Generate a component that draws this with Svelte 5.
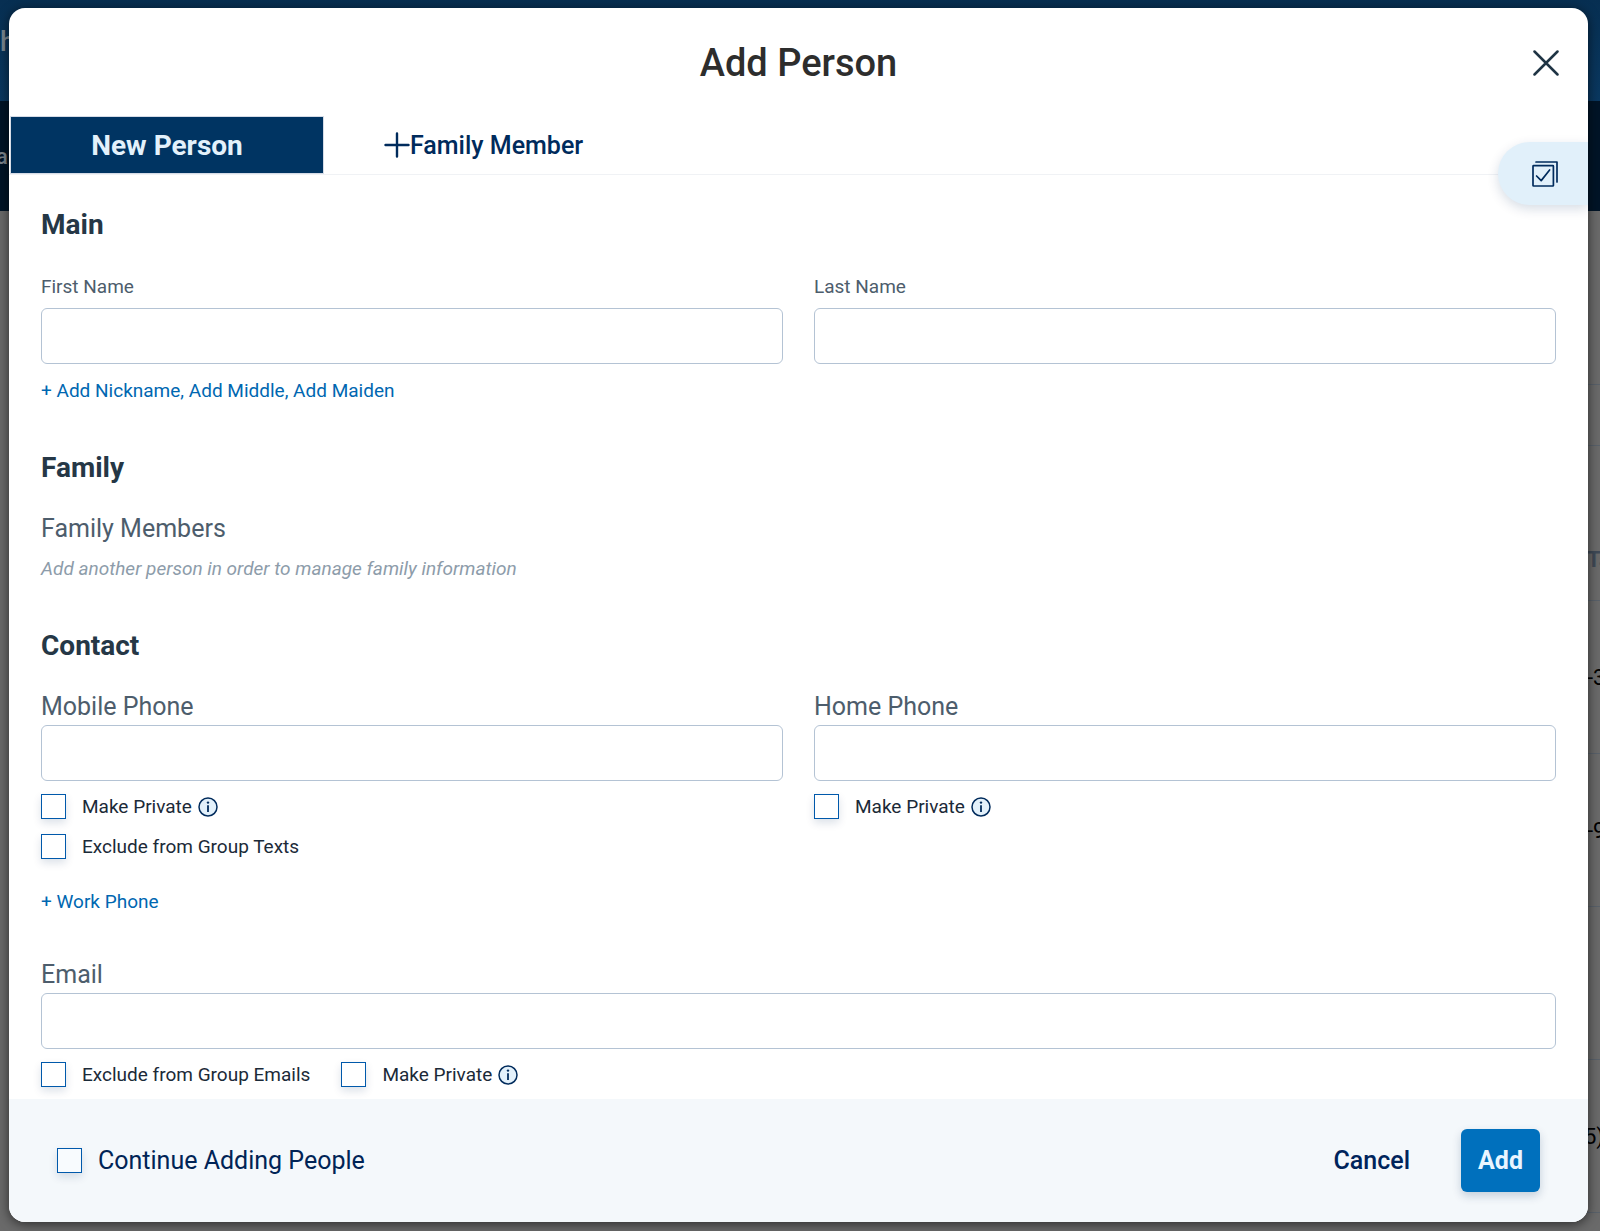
<script lang="ts">
  interface PersonForm {
    firstName: string;
    lastName: string;
    mobilePhone: string;
    homePhone: string;
    email: string;
    mobilePrivate: boolean;
    excludeTexts: boolean;
    homePrivate: boolean;
    excludeEmails: boolean;
    emailPrivate: boolean;
  }

  let form: PersonForm = $state({
    firstName: '',
    lastName: '',
    mobilePhone: '',
    homePhone: '',
    email: '',
    mobilePrivate: false,
    excludeTexts: false,
    homePrivate: false,
    excludeEmails: false,
    emailPrivate: false
  });

  let continueAdding = $state(false);

  function handleSubmit(event: SubmitEvent) {
    event.preventDefault();
  }
</script>

{#snippet infoIcon()}
  <svg class="info" viewBox="0 0 20 20" role="img" aria-label="More information">
    <circle cx="10" cy="10" r="9" fill="#e3f1fb" stroke="#002b5c" stroke-width="1.5" />
    <circle cx="10" cy="5.6" r="1.2" fill="#002b5c" />
    <path d="M10 8.2V15" stroke="#002b5c" stroke-width="1.8" fill="none" />
  </svg>
{/snippet}

<div class="screen">
  <!-- Page behind the dialog -->
  <div class="page" aria-hidden="true">
    <div class="topbar">h</div>
    <div class="navbar">a</div>
    <div class="listing">
      <div class="row spacer"></div>
      <div class="row filter"></div>
      <div class="row heading">Ta</div>
      <div class="row">-3</div>
      <div class="row">-9</div>
      <div class="row"></div>
      <div class="row last">5)</div>
    </div>
  </div>

  <form class="modal" role="dialog" aria-labelledby="dialog-title" onsubmit={handleSubmit}>
    <header>
      <h1 id="dialog-title">Add Person</h1>
      <button type="button" class="close" aria-label="Close">
        <svg viewBox="0 0 26 26" fill="none" stroke="#1f3444" stroke-width="2.5" stroke-linecap="round">
          <path d="M1.5 1.5L24.5 24.5M24.5 1.5L1.5 24.5" />
        </svg>
      </button>
    </header>

    <nav class="tabs">
      <button type="button" class="tab active">New Person</button>
      <button type="button" class="tab">
        <svg viewBox="0 0 26 26" fill="none" stroke="#002b5c" stroke-width="2.4" stroke-linecap="round">
          <path d="M13 1.5V24.5M1.5 13H24.5" />
        </svg>
        <span>Family Member</span>
      </button>
    </nav>

    <button type="button" class="drawer" aria-label="Tasks">
      <svg viewBox="0 0 26 26" fill="none" stroke="#002b5c" stroke-width="1.7" stroke-linecap="round" stroke-linejoin="round">
        <rect x="1" y="4.6" width="20.4" height="20.4" rx="0.6" />
        <path d="M4 1H25V21" />
        <path d="M4.6 15L9.2 19.6L17.6 9" />
      </svg>
    </button>

    <div class="body">
      <h2>Main</h2>
      <div class="columns">
        <div class="field">
          <label class="small" for="first-name">First Name</label>
          <input id="first-name" type="text" bind:value={form.firstName} />
        </div>
        <div class="field">
          <label class="small" for="last-name">Last Name</label>
          <input id="last-name" type="text" bind:value={form.lastName} />
        </div>
      </div>
      <a class="more names" href="#names">+ Add Nickname, Add Middle, Add Maiden</a>

      <h2>Family</h2>
      <h3>Family Members</h3>
      <p class="hint">Add another person in order to manage family information</p>

      <h2>Contact</h2>
      <div class="columns">
        <div class="field">
          <label for="mobile-phone">Mobile Phone</label>
          <input id="mobile-phone" type="tel" bind:value={form.mobilePhone} />
          <div class="checks stacked">
            <label class="check">
              <input type="checkbox" bind:checked={form.mobilePrivate} />
              <span>Make Private</span>
              {@render infoIcon()}
            </label>
            <label class="check">
              <input type="checkbox" bind:checked={form.excludeTexts} />
              <span>Exclude from Group Texts</span>
            </label>
          </div>
        </div>
        <div class="field">
          <label for="home-phone">Home Phone</label>
          <input id="home-phone" type="tel" bind:value={form.homePhone} />
          <div class="checks stacked">
            <label class="check">
              <input type="checkbox" bind:checked={form.homePrivate} />
              <span>Make Private</span>
              {@render infoIcon()}
            </label>
          </div>
        </div>
      </div>
      <a class="more phones" href="#work-phone">+ Work Phone</a>

      <div class="field email">
        <label for="email">Email</label>
        <input id="email" type="email" bind:value={form.email} />
        <div class="checks">
          <label class="check">
            <input type="checkbox" bind:checked={form.excludeEmails} />
            <span>Exclude from Group Emails</span>
          </label>
          <label class="check">
            <input type="checkbox" bind:checked={form.emailPrivate} />
            <span>Make Private</span>
            {@render infoIcon()}
          </label>
        </div>
      </div>
    </div>

    <footer>
      <label class="check large">
        <input type="checkbox" bind:checked={continueAdding} />
        <span>Continue Adding People</span>
      </label>
      <div class="actions">
        <button type="button" class="cancel">Cancel</button>
        <button type="submit" class="add">Add</button>
      </div>
    </footer>
  </form>
</div>

<style>
  :global(body) {
    margin: 0;
    background: #666;
  }

  .screen {
    position: relative;
    min-height: 100vh;
    box-sizing: border-box;
    padding: 8px 12px 9px 9px;
    overflow: hidden;
    font-family: Roboto, 'Liberation Sans', sans-serif;
  }

  .screen *,
  .screen *::before {
    box-sizing: border-box;
  }

  button {
    padding: 0;
    border: none;
    background: none;
    font-family: inherit;
    cursor: pointer;
  }

  /* Dimmed page */
  .page {
    position: absolute;
    inset: 0;
    background: #6a6a6a;
    overflow: hidden;
  }

  .topbar {
    height: 101px;
    padding-top: 24px;
    background: linear-gradient(#072f52, #0a3860);
    color: #7b8791;
    font-size: 28px;
    line-height: 36px;
    font-weight: 500;
  }

  .navbar {
    height: 110px;
    padding-top: 40px;
    background: #011427;
    color: #7d858c;
    font-size: 22px;
    line-height: 32px;
    margin-left: -4px;
    font-weight: 500;
  }

  .listing {
    display: flex;
    flex-direction: column;
    align-items: flex-end;
  }

  .row {
    display: flex;
    align-items: center;
    width: 13px;
    height: 153px;
    border-bottom: 1px solid #59616a;
    color: #000;
    font-size: 22px;
    white-space: nowrap;
  }

  .row.spacer {
    height: 174px;
  }

  .row.filter {
    height: 61px;
  }

  .row.heading {
    height: 155px;
    padding-top: 73px;
    color: #3f4a57;
    font-weight: 700;
  }

  .row.last {
    width: 16px;
  }

  /* Dialog */
  .modal {
    position: relative;
    display: flex;
    flex-direction: column;
    min-height: calc(100vh - 17px);
    border-radius: 16px;
    background: #fff;
    box-shadow: 0 2px 12px rgba(0, 0, 0, 0.6);
    overflow: hidden;
  }

  header {
    display: grid;
    grid-template-columns: 1fr auto 1fr;
    align-items: center;
    height: 108px;
    padding: 2px 29px 0;
  }

  h1 {
    grid-column: 2;
    margin: 0;
    color: #2d2d2d;
    font-size: 38px;
    line-height: 48px;
    font-weight: 500;
  }

  .close {
    justify-self: end;
    width: 26px;
    height: 26px;
  }

  .close svg,
  .tab svg,
  .drawer svg {
    display: block;
    width: 26px;
    height: 26px;
  }

  .tabs {
    display: flex;
    height: 59px;
    padding-left: 1px;
    border-bottom: 1px solid #f0f2f5;
  }

  .tab {
    display: flex;
    align-items: center;
    padding: 0 60px;
    color: #002b5c;
    font-size: 25px;
    font-weight: 500;
  }

  .tab.active {
    justify-content: center;
    width: 314px;
    border: 1px solid #d5dbe6;
    background: #003462;
    color: #e3f1fb;
    font-size: 28px;
    font-weight: 700;
  }

  .drawer {
    position: absolute;
    top: 134px;
    right: 0;
    width: 90px;
    height: 63px;
    padding-left: 34px;
    border-radius: 32px 0 0 32px;
    background: #e1f0fa;
    box-shadow: 0 4px 12px rgba(0, 43, 92, 0.16);
  }

  .body {
    flex: 1;
    padding: 32px 32px 12px;
  }

  h2 {
    margin: 47px 0 26px;
    color: #253746;
    font-size: 28px;
    line-height: 36px;
    font-weight: 700;
  }

  h2:first-child {
    margin-top: 0;
  }

  h3 {
    margin: 0 0 11px;
    color: #4d5d6c;
    font-size: 25px;
    line-height: 34px;
    font-weight: 400;
  }

  .hint {
    margin: 0;
    color: #8d9caa;
    font-size: 19px;
    line-height: 24px;
    font-style: italic;
  }

  .columns {
    display: grid;
    grid-template-columns: 1fr 1fr;
    gap: 31px;
  }

  .field {
    display: flex;
    flex-direction: column;
  }

  .field > label {
    margin-bottom: 1px;
    color: #4d5d6c;
    font-size: 25px;
    line-height: 34px;
  }

  .field > label.small {
    margin-bottom: 3px;
    font-size: 19px;
    line-height: 36px;
  }

  .field > input {
    width: 100%;
    height: 56px;
    padding: 0 16px;
    border: 1px solid #b4c3d4;
    border-radius: 6px;
    background: #fff;
    color: #253746;
    font-family: inherit;
    font-size: 19px;
  }

  .more {
    display: block;
    width: fit-content;
    color: #0067b1;
    font-size: 19px;
    line-height: 24px;
    text-decoration: none;
  }

  .more.names {
    margin-top: 15px;
  }

  .more.phones {
    margin-top: 31px;
  }

  .email {
    margin-top: 44px;
  }

  .checks {
    display: flex;
    gap: 31px;
    margin-top: 13px;
  }

  .checks.stacked {
    flex-direction: column;
    gap: 15px;
  }

  .check {
    display: flex;
    align-items: center;
    width: fit-content;
    color: #1b2a38;
    font-size: 19px;
    line-height: 25px;
  }

  .check.large {
    color: #002456;
    font-size: 25px;
  }

  .check input {
    appearance: none;
    width: 25px;
    height: 25px;
    margin: 0 16px 0 0;
    border: 1px solid #0059ab;
    background: #fff;
    box-shadow: 0 4px 8px rgba(0, 43, 92, 0.14);
  }

  .check input:checked {
    background: #0070bf;
    box-shadow: inset 0 0 0 4px #fff;
  }

  .info {
    width: 20px;
    height: 20px;
    margin-left: 6px;
  }

  footer {
    display: flex;
    align-items: center;
    justify-content: space-between;
    height: 123px;
    padding: 0 48px;
    background: #f4f8fb;
  }

  .check.large input {
    background: #f8fbfe;
  }

  .actions {
    display: flex;
    align-items: center;
    gap: 51px;
  }

  .cancel,
  .add {
    font-size: 25px;
    line-height: 32px;
    font-weight: 500;
  }

  .cancel {
    color: #00245b;
  }

  .add {
    height: 63px;
    padding: 0 17px;
    border-radius: 6px;
    background: #0070bd;
    box-shadow: 0 4px 10px rgba(0, 43, 92, 0.2);
    color: #e9f5ff;
    font-weight: 700;
  }
</style>
